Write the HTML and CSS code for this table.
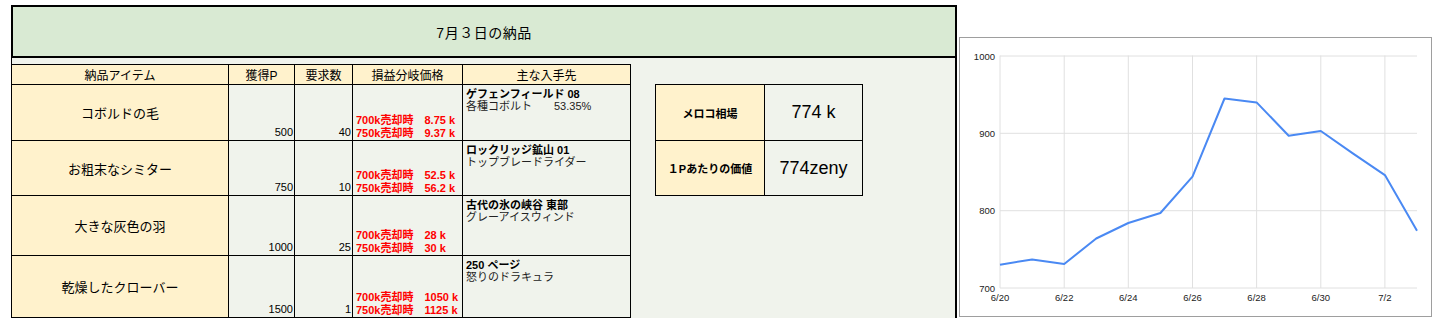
FILE: index.html
```html
<!DOCTYPE html>
<html lang="ja">
<head>
<meta charset="utf-8">
<title>7月３日の納品</title>
<link rel="stylesheet" href="styles.css">
</head>
<body>
<div class="page">
  <div class="sheet">
    <div class="title">7月３日の納品</div>
    <div class="sheet-body">
      <div class="grid">
        <div class="hd">納品アイテム</div>
        <div class="hd">獲得P</div>
        <div class="hd">要求数</div>
        <div class="hd">損益分岐価格</div>
        <div class="hd">主な入手先</div>

        <div class="item r1">コボルドの毛</div>
        <div class="num">500</div>
        <div class="num">40</div>
        <div class="be"><div>700k売却時　8.75 k</div><div>750k売却時　9.37 k</div></div>
        <div class="src"><div class="loc">ゲフェンフィールド 08</div><div class="mob">各種コボルト　　53.35%</div></div>

        <div class="item r2">お粗末なシミター</div>
        <div class="num">750</div>
        <div class="num">10</div>
        <div class="be"><div>700k売却時　52.5 k</div><div>750k売却時　56.2 k</div></div>
        <div class="src"><div class="loc">ロックリッジ鉱山 01</div><div class="mob">トップブレードライダー</div></div>

        <div class="item r3">大きな灰色の羽</div>
        <div class="num">1000</div>
        <div class="num">25</div>
        <div class="be"><div>700k売却時　28 k</div><div>750k売却時　30 k</div></div>
        <div class="src"><div class="loc">古代の氷の峡谷 東部</div><div class="mob">グレーアイスウィンド</div></div>

        <div class="item r4">乾燥したクローバー</div>
        <div class="num">1500</div>
        <div class="num">1</div>
        <div class="be"><div>700k売却時　1050 k</div><div>750k売却時　1125 k</div></div>
        <div class="src"><div class="loc">250 ページ</div><div class="mob">怒りのドラキュラ</div></div>
      </div>

      <div class="panel">
        <div class="plabel p1">メロコ相場</div>
        <div class="pvalue">774 k</div>
        <div class="plabel p2">１Pあたりの価値</div>
        <div class="pvalue">774zeny</div>
      </div>
    </div>
  </div>

  <div class="chart">
    <svg width="471" height="278" viewBox="0 0 471 278" xmlns="http://www.w3.org/2000/svg">
      <g class="gridlines">
        <line x1="40" y1="18" x2="457" y2="18"/>
        <line x1="40" y1="95.3" x2="457" y2="95.3"/>
        <line x1="40" y1="172.7" x2="457" y2="172.7"/>
        <line x1="40" y1="17.5" x2="40" y2="250"/>
        <line x1="104.2" y1="17.5" x2="104.2" y2="250"/>
        <line x1="168.3" y1="17.5" x2="168.3" y2="250"/>
        <line x1="232.5" y1="17.5" x2="232.5" y2="250"/>
        <line x1="296.6" y1="17.5" x2="296.6" y2="250"/>
        <line x1="360.8" y1="17.5" x2="360.8" y2="250"/>
        <line x1="424.9" y1="17.5" x2="424.9" y2="250"/>
        <line x1="40" y1="250" x2="457" y2="250"/>
      </g>
      <g class="ylabels">
        <text x="35" y="21.5">1000</text>
        <text x="35" y="98.8">900</text>
        <text x="35" y="176.2">800</text>
        <text x="35" y="253.5">700</text>
      </g>
      <g class="xlabels">
        <text x="40" y="263">6/20</text>
        <text x="104.2" y="263">6/22</text>
        <text x="168.3" y="263">6/24</text>
        <text x="232.5" y="263">6/26</text>
        <text x="296.6" y="263">6/28</text>
        <text x="360.8" y="263">6/30</text>
        <text x="424.9" y="263">7/2</text>
      </g>
      <polyline class="series" points="40,226.8 72.1,221.4 104.2,226 136.2,200.5 168.3,185 200.4,175 232.5,138.6 264.5,60.5 296.6,64.4 328.7,97.7 360.8,93 392.8,115.4 424.9,137.1 457,192.8"/>
    </svg>
  </div>
</div>
</body>
</html>
```

FILE: styles.css
```css
* {
  box-sizing: border-box;
}

html, body {
  margin: 0;
  padding: 0;
  background: #ffffff;
}

body {
  font-family: "Liberation Sans", "Noto Sans CJK JP", sans-serif;
  color: #000;
}

.page {
  display: flex;
  align-items: flex-start;
  padding-left: 11px;
}

.sheet {
  width: 946px;
  margin-top: 5px;
}

.title {
  height: 53px;
  border: 2px solid #000;
  background: #d9ead3;
  display: flex;
  align-items: center;
  justify-content: center;
  font-size: 14px;
  letter-spacing: 0.5px;
}

.sheet-body {
  display: flex;
  align-items: flex-start;
  background: #f0f3ec;
  border-left: 1px solid #000;
  border-right: 2px solid #000;
  padding-top: 6px;
  height: 260px;
}

.grid {
  display: grid;
  grid-template-columns: 217px 66px 58px 110px 168px;
  grid-template-rows: 20px 56px 55px 60px 62px;
  border-top: 1px solid #000;
}

.grid > div {
  border-right: 1px solid #000;
  border-bottom: 1px solid #000;
}

.hd {
  background: #fff2cc;
  font-size: 12px;
  display: flex;
  align-items: center;
  justify-content: center;
}

.item {
  background: #fff2cc;
  font-size: 13px;
  display: flex;
  align-items: center;
  justify-content: center;
}

.num {
  font-size: 11px;
  line-height: 13px;
  display: flex;
  align-items: flex-end;
  justify-content: flex-end;
  padding: 0 1px 1px 0;
}

.be {
  font-size: 11px;
  font-weight: bold;
  color: #ff0000;
  line-height: 12.5px;
  display: flex;
  flex-direction: column;
  justify-content: flex-end;
  padding: 0 0 1px 3px;
  white-space: nowrap;
}

.src {
  font-size: 11px;
  line-height: 12.5px;
  padding: 2.5px 0 0 3px;
  white-space: nowrap;
}

.loc {
  font-weight: bold;
}

.mob {
  color: #222;
}

.panel {
  display: grid;
  grid-template-columns: 109px 98px;
  grid-template-rows: 57px 55px;
  margin-top: 20px;
  margin-left: 24px;
  border-left: 1px solid #000;
}

.panel > div {
  border-right: 1px solid #000;
  border-bottom: 1px solid #000;
  display: flex;
  align-items: center;
  justify-content: center;
}

.panel > .p1,
.panel > .p1 + .pvalue {
  border-top: 1px solid #000;
}

.plabel {
  background: #fff2cc;
  font-size: 11px;
  font-weight: bold;
  white-space: nowrap;
}

.pvalue {
  font-size: 18px;
}

.chart {
  margin-top: 37px;
  margin-left: 2px;
  width: 473px;
  height: 280px;
  border: 1px solid #9e9e9e;
  background: #fff;
}

.chart svg {
  display: block;
}

.gridlines line {
  stroke: #e0e0e0;
  stroke-width: 1;
}

.ylabels text {
  font-family: "Liberation Sans", sans-serif;
  font-size: 9.5px;
  fill: #222;
  text-anchor: end;
}

.xlabels text {
  font-family: "Liberation Sans", sans-serif;
  font-size: 9.5px;
  fill: #222;
  text-anchor: middle;
}

.series {
  fill: none;
  stroke: #4a89f3;
  stroke-width: 2;
  stroke-linejoin: round;
}
```
